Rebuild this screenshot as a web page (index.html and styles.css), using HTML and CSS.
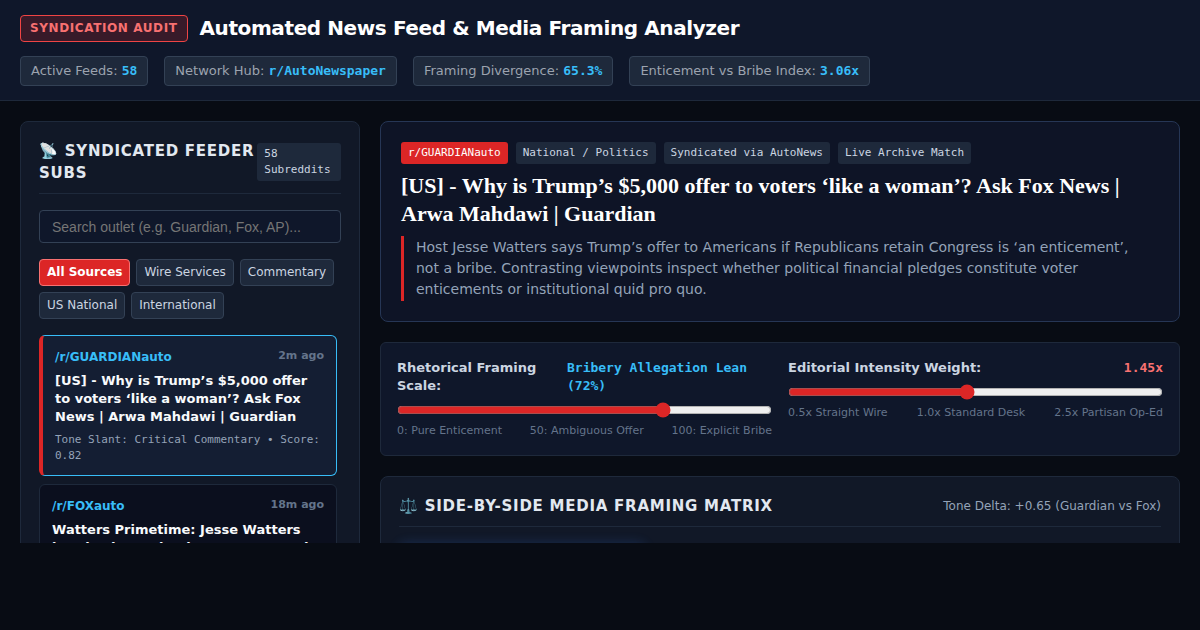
FILE: index.html
```html
<!DOCTYPE html>
<html lang="en">
<head>
    <meta charset="UTF-8">
    <meta name="viewport" content="width=device-width, initial-scale=1.0">
    <title>Automated News Feed &amp; Media Framing Analyzer</title>
    <link rel="stylesheet" href="styles.css">
</head>
<body>
    <header class="top-header">
        <div class="brand">
            <span class="audit-badge">SYNDICATION AUDIT</span>
            <h1>Automated News Feed &amp; Media Framing Analyzer</h1>
        </div>
        <div class="stats">
            <div class="stat">Active Feeds: <strong>58</strong></div>
            <div class="stat">Network Hub: <strong>r/AutoNewspaper</strong></div>
            <div class="stat">Framing Divergence: <strong>65.3%</strong></div>
            <div class="stat">Enticement vs Bribe Index: <strong>3.06x</strong></div>
        </div>
    </header>

    <main class="workspace">
        <aside class="panel sidebar">
            <div class="panel-header">
                <h2>📡 Syndicated Feeder Subs</h2>
                <span class="tag">58 Subreddits</span>
            </div>
            <input type="text" class="search" aria-label="Search outlet" placeholder="Search outlet (e.g. Guardian, Fox, AP)...">
            <div class="filters">
                <button class="filter active">All Sources</button>
                <button class="filter">Wire Services</button>
                <button class="filter">Commentary</button>
                <button class="filter">US National</button>
                <button class="filter">International</button>
            </div>
            <div class="feed-list">
                <article class="feed-item selected">
                    <div class="feed-top">
                        <span class="feed-sub">/r/GUARDIANauto</span>
                        <span class="feed-time">2m ago</span>
                    </div>
                    <h3>[US] - Why is Trump’s $5,000 offer to voters ‘like a woman’? Ask Fox News | Arwa Mahdawi | Guardian</h3>
                    <p class="feed-meta">Tone Slant: Critical Commentary • Score: 0.82</p>
                </article>
                <article class="feed-item">
                    <div class="feed-top">
                        <span class="feed-sub">/r/FOXauto</span>
                        <span class="feed-time">18m ago</span>
                    </div>
                    <h3>Watters Primetime: Jesse Watters breaks down election voter rewards</h3>
                </article>
            </div>
        </aside>

        <div class="content">
            <section class="hero">
                <div class="tags">
                    <span class="tag tag-red">r/GUARDIANauto</span>
                    <span class="tag">National / Politics</span>
                    <span class="tag">Syndicated via AutoNews</span>
                    <span class="tag">Live Archive Match</span>
                </div>
                <h2 class="headline">[US] - Why is Trump’s $5,000 offer to voters ‘like a woman’? Ask Fox News | Arwa Mahdawi | Guardian</h2>
                <blockquote>Host Jesse Watters says Trump’s offer to Americans if Republicans retain Congress is ‘an enticement’, not a bribe. Contrasting viewpoints inspect whether political financial pledges constitute voter enticements or institutional quid pro quo.</blockquote>
            </section>

            <section class="controls">
                <div class="control">
                    <div class="control-label">
                        <label for="framing">Rhetorical Framing Scale:</label>
                        <output class="value" for="framing">Bribery Allegation Lean (72%)</output>
                    </div>
                    <input type="range" id="framing" min="0" max="100" value="72">
                    <div class="ticks">
                        <span>0: Pure Enticement</span>
                        <span>50: Ambiguous Offer</span>
                        <span>100: Explicit Bribe</span>
                    </div>
                </div>
                <div class="control">
                    <div class="control-label">
                        <label for="intensity">Editorial Intensity Weight:</label>
                        <output class="value value-red" for="intensity">1.45x</output>
                    </div>
                    <input type="range" id="intensity" min="0.5" max="2.5" step="0.05" value="1.45">
                    <div class="ticks">
                        <span>0.5x Straight Wire</span>
                        <span>1.0x Standard Desk</span>
                        <span>2.5x Partisan Op-Ed</span>
                    </div>
                </div>
            </section>

            <section class="panel">
                <div class="panel-header">
                    <h2>⚖️ Side-by-Side Media Framing Matrix</h2>
                    <span class="delta">Tone Delta: +0.65 (Guardian vs Fox)</span>
                </div>
                <div class="matrix">
                    <div class="matrix-card highlighted"></div>
                    <div class="matrix-card"></div>
                    <div class="matrix-card"></div>
                </div>
            </section>
        </div>
    </main>
</body>
</html>
```
FILE: styles.css
```css
* {
    box-sizing: border-box;
    margin: 0;
    padding: 0;
}

body {
    display: flex;
    flex-direction: column;
    height: 100vh;
    padding-bottom: 87px;
    overflow: hidden;
    background: #080c14;
    color: #e2e8f0;
    font-family: "DejaVu Sans", sans-serif;
    font-size: 13px;
}

/* Header */
.top-header {
    flex-shrink: 0;
    padding: 15px 20px 14px;
    background: #0f172a;
    border-bottom: 1px solid #1e293b;
}

.brand {
    display: flex;
    align-items: center;
    gap: 12px;
    margin-bottom: 14px;
}

.audit-badge {
    padding: 4px 9px;
    border: 1px solid #ef4444;
    border-radius: 4px;
    background: rgba(220, 38, 38, 0.2);
    color: #f87171;
    font-size: 12px;
    font-weight: bold;
    line-height: 17px;
    letter-spacing: 0.05em;
}

h1 {
    color: #fff;
    font-size: 20px;
    line-height: 27px;
    letter-spacing: -0.02em;
}

.stats {
    display: flex;
    flex-wrap: wrap;
    gap: 16px;
}

.stat {
    padding: 5px 10px;
    border: 1px solid #334155;
    border-radius: 4px;
    background: #1e293b;
    color: #9ca3af;
    line-height: 18px;
}

.stat strong {
    color: #38bdf8;
    font-family: "DejaVu Sans Mono", monospace;
}

/* Layout */
.workspace {
    flex: 1;
    min-height: 0;
    display: grid;
    grid-template-columns: 340px 1fr;
    align-items: start;
    gap: 20px;
    padding: 20px 20px 0;
    overflow: hidden;
}

.content {
    display: flex;
    flex-direction: column;
    gap: 20px;
}

.panel {
    padding: 18px;
    border: 1px solid #1e293b;
    border-radius: 8px;
    background: #111827;
}

.panel-header {
    display: flex;
    justify-content: space-between;
    align-items: center;
    padding-bottom: 9px;
    margin-bottom: 16px;
    border-bottom: 1px solid #1e293b;
}

.panel-header h2 {
    font-size: 15px;
    line-height: 22px;
    letter-spacing: 0.05em;
    text-transform: uppercase;
}

.tag {
    padding: 3px 7px;
    border-radius: 3px;
    background: #1e293b;
    color: #cbd5e1;
    font-family: "DejaVu Sans Mono", monospace;
    font-size: 11px;
    line-height: 16px;
}

.tag-red {
    background: #dc2626;
    color: #fff;
}

.delta {
    color: #94a3b8;
    font-size: 12px;
}

/* Sidebar */
.search {
    display: block;
    width: 100%;
    height: 33px;
    padding: 8px 12px;
    margin-bottom: 16px;
    border: 1px solid #334155;
    border-radius: 4px;
    background: #0f172a;
    color: #fff;
    font-family: "Liberation Sans", Arial, sans-serif;
    font-size: 14px;
}

.search::placeholder {
    color: #757575;
}

.filters {
    display: flex;
    flex-wrap: wrap;
    gap: 6px;
    margin-bottom: 16px;
}

.filter {
    padding: 4px 7px;
    border: 1px solid #334155;
    border-radius: 4px;
    background: #1e293b;
    color: #cbd5e1;
    font-family: inherit;
    font-size: 12px;
    line-height: 17px;
    cursor: pointer;
}

.filter.active {
    background: #dc2626;
    border-color: #f87171;
    color: #fff;
    font-weight: bold;
}

.feed-list {
    display: flex;
    flex-direction: column;
    gap: 8px;
    padding-right: 4px;
}

.feed-item {
    padding: 12px 12px 11px;
    border: 1px solid #1e293b;
    border-radius: 6px;
    background: #0b0f1e;
}

.feed-item.selected {
    border-color: #38bdf8;
    border-left: 4px solid #dc2626;
    background: #141e33;
}

.feed-top {
    display: flex;
    justify-content: space-between;
    margin-bottom: 6px;
    font-weight: bold;
}

.feed-sub {
    color: #38bdf8;
    font-size: 12px;
    line-height: 18px;
}

.feed-time {
    color: #64748b;
    font-size: 11px;
    line-height: 16px;
}

.feed-item h3 {
    color: #f8fafc;
    font-size: 13px;
    line-height: 18px;
}

.feed-meta {
    margin-top: 6px;
    color: #94a3b8;
    font-family: "DejaVu Sans Mono", monospace;
    font-size: 11px;
    line-height: 16px;
}

/* Lead story */
.hero {
    padding: 20px;
    border: 1px solid #263655;
    border-radius: 8px;
    background: #0e1426;
}

.tags {
    display: flex;
    flex-wrap: wrap;
    gap: 8px;
    margin-bottom: 8px;
}

.headline {
    margin-bottom: 8px;
    color: #fff;
    font-family: "Liberation Serif", Georgia, serif;
    font-size: 22px;
    line-height: 28px;
}

blockquote {
    padding: 1px 20px 1px 12px;
    border-left: 3px solid #dc2626;
    color: #94a3b8;
    font-size: 14px;
    line-height: 21px;
}

/* Sliders */
.controls {
    display: grid;
    grid-template-columns: 1fr 1fr;
    gap: 16px;
    padding: 16px;
    border: 1px solid #1e293b;
    border-radius: 6px;
    background: #0f172a;
}

.control-label {
    display: flex;
    justify-content: space-between;
    margin-bottom: 7px;
    color: #cbd5e1;
    font-weight: bold;
    line-height: 18px;
}

.value {
    color: #38bdf8;
    font-family: "DejaVu Sans Mono", monospace;
}

.value-red {
    color: #f87171;
}

input[type="range"] {
    display: block;
    width: 100%;
    accent-color: #dc2626;
}

.ticks {
    display: flex;
    justify-content: space-between;
    margin-top: 5px;
    color: #64748b;
    font-size: 11px;
    line-height: 16px;
}

/* Framing matrix */
.matrix {
    display: grid;
    grid-template-columns: repeat(3, 1fr);
    gap: 12px;
}

.matrix-card {
    height: 180px;
    border: 1px solid #1e293b;
    border-radius: 6px;
    background: #0f172a;
}

.matrix-card.highlighted {
    border-color: #38bdf8;
    box-shadow: 0 0 12px rgba(59, 130, 246, 0.2);
}
```
